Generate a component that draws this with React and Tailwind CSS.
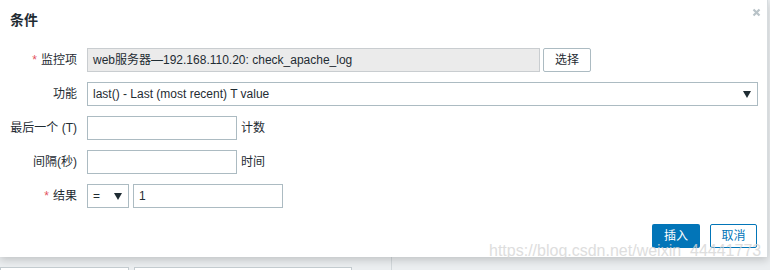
const FONT = { fontFamily: '"Liberation Sans", "Noto Sans CJK SC", sans-serif' };

function Arrow() {
  return (
    <svg width="8" height="7" viewBox="0 0 8 7" className="shrink-0">
      <path d="M0 0 H8 L4 7 Z" fill="#1f2c33" />
    </svg>
  );
}

function Label({ children, required }) {
  return (
    <div className="flex h-6 items-center justify-end whitespace-nowrap text-[#1f2c33]">
      {required ? <span className="mr-1 text-[#e3525e]">*</span> : null}
      {children}
    </div>
  );
}

const box = "h-6 border px-[5px] flex items-center";

export default function App() {
  return (
    <div className="relative h-[270px] w-[770px] overflow-hidden bg-[#ebeef0] text-[12px]" style={FONT}>
      {/* page behind the dialog */}
      <div className="absolute left-0 top-[267px] h-4 w-[129px] border border-[#c4ccd0] bg-white" />
      <div className="absolute left-[134px] top-[267px] h-4 w-[218px] border border-[#c4ccd0] bg-white" />
      <div className="absolute left-[391px] top-[257px] h-4 w-px bg-[#d2d8db]" />

      <div className="relative flex h-[257px] w-[768px] flex-col border-r border-[#d7dcdf] bg-white shadow-[0_3px_8px_rgba(0,0,0,0.18)]">
        <div className="flex items-start justify-between pl-[10px] pr-[6px] pt-[10px]">
          <div className="text-[14px] font-bold leading-5 text-[#1f2c33]">条件</div>
          <svg width="9" height="9" viewBox="0 0 9 9" className="mt-[-2px]">
            <path d="M1.5 1.5 L7.5 7.5 M7.5 1.5 L1.5 7.5" stroke="#b9c3c8" strokeWidth="2.2" />
          </svg>
        </div>

        <div className="mt-[18px] grid grid-cols-[77px_1fr] gap-x-[10px] gap-y-[10px] pr-[10px]">
          <Label required>监控项</Label>
          <div className="flex gap-[3px]">
            <div className={`${box} w-[453px] border-[#c9cdd0] bg-[#ebebeb] text-[#1f2c33]`}>
              web服务器—192.168.110.20: check_apache_log
            </div>
            <div className="flex h-6 w-[48px] items-center justify-center rounded-[2px] border border-[#acbbc2] bg-white text-[#1f2c33]">
              选择
            </div>
          </div>

          <Label>功能</Label>
          <div className={`${box} w-[671px] justify-between border-[#acbbc2] bg-white pr-[6px] text-[#1f2c33]`}>
            <span>last() - Last (most recent) T value</span>
            <Arrow />
          </div>

          <Label>最后一个 (T)</Label>
          <div className="flex items-center gap-[4px]">
            <div className={`${box} w-[150px] border-[#acbbc2] bg-white`} />
            <span className="text-[#1f2c33]">计数</span>
          </div>

          <Label>间隔(秒)</Label>
          <div className="flex items-center gap-[4px]">
            <div className={`${box} w-[150px] border-[#acbbc2] bg-white`} />
            <span className="text-[#1f2c33]">时间</span>
          </div>

          <Label required>结果</Label>
          <div className="flex items-center gap-[4px]">
            <div className={`${box} w-[42px] justify-between border-[#acbbc2] bg-white pr-[6px] text-[#1f2c33]`}>
              <span>=</span>
              <Arrow />
            </div>
            <div className={`${box} w-[150px] border-[#acbbc2] bg-white text-[#1f2c33]`}>1</div>
          </div>
        </div>

        <div className="mt-[16px] flex justify-end gap-[10px] pr-[10px]">
          <div className="flex h-6 w-[48px] items-center justify-center rounded-[2px] bg-[#0275b8] text-white">
            插入
          </div>
          <div className="flex h-6 w-[47px] items-center justify-center rounded-[2px] border border-[#0275b8] bg-white text-[#0275b8]">
            取消
          </div>
        </div>
      </div>

      <div className="pointer-events-none absolute left-[489px] top-[239px] whitespace-nowrap text-[16px] text-[#d6d6d6] opacity-80">
        https://blog.csdn.net/weixin_44441773
      </div>
    </div>
  );
}
